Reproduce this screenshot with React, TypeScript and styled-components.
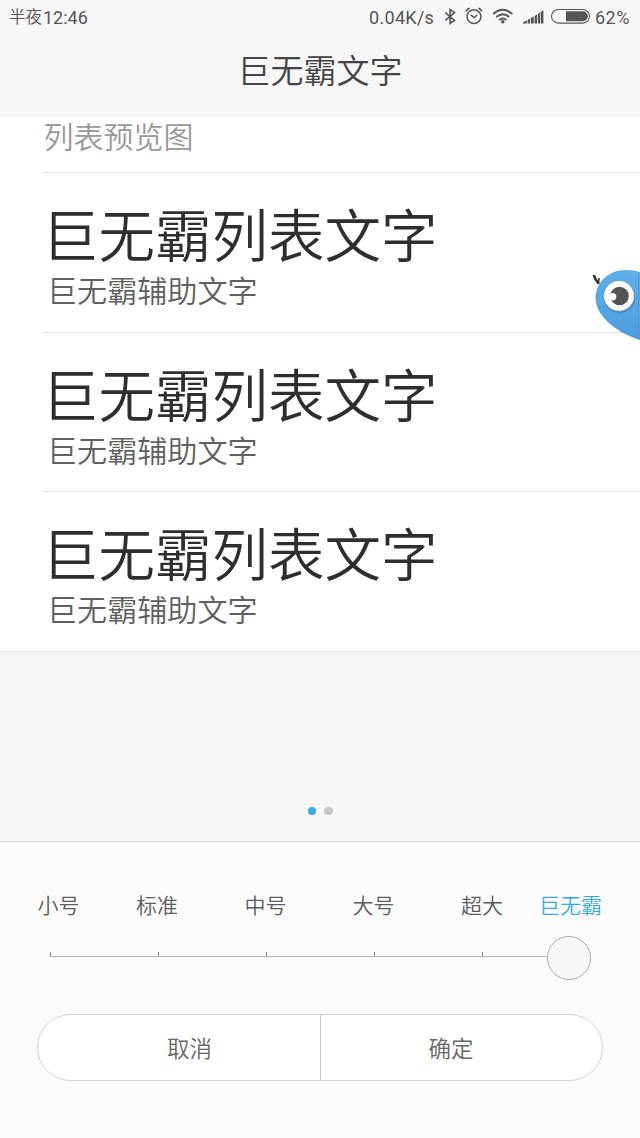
import React from "react";
import styled, { createGlobalStyle } from "styled-components";

const GlobalStyle = createGlobalStyle`
  * { box-sizing: border-box; }
  body { margin: 0; background: #f7f7f7; }
`;

const Screen = styled.div`
  position: relative;
  display: flex;
  flex-direction: column;
  width: 640px;
  height: 1138px;
  overflow: hidden;
  background: #f7f7f7;
  font-family: "Noto Sans CJK SC", sans-serif;
  font-weight: 350;
  white-space: nowrap;
`;

const StatusBar = styled.div`
  display: flex;
  align-items: center;
  height: 34px;
  padding: 0 9px;
  color: #555;
  font-family: Roboto, "Noto Sans CJK SC", sans-serif;
  font-size: 18px;
  font-weight: 400;
  line-height: 34px;
`;

const Period = styled.span`
  width: 34px;
  padding-top: 2px;
  font-size: 16.5px;
  font-weight: 350;
`;

const Clock = styled.span`
  flex: 1;
  padding-top: 1px;
`;

const Speed = styled.span`
  width: 74px;
  padding-top: 1px;
  letter-spacing: 0.3px;
`;

const StatusIcons = styled.svg`
  display: block;
  width: 152px;
  height: 34px;
`;

const Percent = styled.span`
  width: 36px;
  padding-top: 1px;
  letter-spacing: 0.5px;
`;

const Title = styled.h1`
  height: 82px;
  margin: 0;
  padding-top: 11px;
  border-bottom: 1px solid #f0f0f0;
  color: #444;
  font-size: 33px;
  font-weight: 350;
  line-height: 49px;
  text-align: center;
`;

const Preview = styled.section`
  height: 536px;
  padding-left: 43px;
  border-bottom: 1px solid #e9e9e9;
  background: #fff;
`;

const PreviewLabel = styled.div`
  height: 56px;
  padding-left: 0.5px;
  color: #999;
  font-size: 30px;
  line-height: 39px;
`;

const Row = styled.div`
  height: 159.5px;
  padding-top: 22px;
  border-top: 1px solid #e6e6e6;
`;

const RowTitle = styled.div`
  margin-left: -1px;
  color: #2e2e2e;
  font-size: 56.5px;
  line-height: 74px;
`;

const RowNote = styled.div`
  padding-left: 4px;
  color: #606060;
  font-size: 30.1px;
  line-height: 40px;
`;

const Pager = styled.div`
  display: flex;
  flex: 1;
  align-items: flex-end;
  justify-content: center;
  gap: 8px;
  padding-bottom: 26px;
`;

const Dot = styled.i<{ $active?: boolean }>`
  width: 8.5px;
  height: 8.5px;
  border-radius: 50%;
  background: ${(p) => (p.$active ? "#33a9e8" : "#c6c6c6")};
`;

const Panel = styled.section`
  height: 297px;
  padding: 46px 37px 0;
  border-top: 1px solid #d8d8d8;
  background: #fbfbfb;
`;

const Sizes = styled.div`
  display: flex;
  height: 32px;
  line-height: 32px;
`;

const SizeLabel = styled.span<{ $gap: number; $active?: boolean }>`
  margin-left: ${(p) => p.$gap}px;
  color: ${(p) => (p.$active ? "#3aaadd" : "#5c5c5c")};
  font-size: 21px;
`;

const Slider = styled.div`
  display: flex;
  align-items: center;
  height: 44px;
  margin: 16px 0 0 13px;
`;

const Segment = styled.div<{ $width: number }>`
  width: ${(p) => p.$width}px;
  height: 5px;
  margin-top: -7px;
  border-bottom: 1px solid #b4b4b4;
  background: linear-gradient(#8c8c8c, #8c8c8c) 0 0 / 1px 4px no-repeat;
`;

const Knob = styled.div`
  width: 44px;
  height: 44px;
  border: 1px solid #adadad;
  border-radius: 50%;
  background: #f7f7f7;
`;

const Actions = styled.div`
  display: grid;
  grid-template-columns: 282px 1fr;
  width: 566px;
  height: 67px;
  margin-top: 34px;
  border: 1px solid #d2d2d2;
  border-radius: 34px;
  background: #fff;
  overflow: hidden;
`;

const Action = styled.button<{ $inset: string }>`
  padding: ${(p) => p.$inset};
  border: 0;
  background: transparent;
  color: #666;
  font: inherit;
  font-size: 22.5px;

  & + & {
    border-left: 1px solid #c8c8c8;
  }
`;

const Mascot = styled.svg`
  position: absolute;
  top: 264px;
  right: 0;
  width: 54px;
  height: 82px;
`;

const sizes = [
  { text: "小号", gap: 0.5 },
  { text: "标准", gap: 56.5 },
  { text: "中号", gap: 66.5 },
  { text: "大号", gap: 66 },
  { text: "超大", gap: 66.5 },
  { text: "巨无霸", gap: 36, active: true },
];

export default function App() {
  return (
    <Screen>
      <GlobalStyle />
      <StatusBar>
        <Period>半夜</Period>
        <Clock>12:46</Clock>
        <Speed>0.04K/s</Speed>
        <StatusIcons viewBox="443 0 152 34" fill="none" stroke="#555">
          <path d="M445.3 12.6l9.2 7.8-4.4 3V9.6l4.4 3-9.2 7.8" strokeWidth="1.6" />
          <circle cx="474" cy="16.7" r="6.9" strokeWidth="1.5" />
          <path d="M470.6 14.8l3.6 2.8 3.2-2.6M466.3 11.5q.5-2.6 3.4-3.3M481.7 11.5q-.5-2.6-3.4-3.3" strokeWidth="1.5" />
          <path d="M493.2 14q9.6-8.4 19.2 0M496.3 17.1q6.5-5.6 13 0M499.2 20q3.6-3 7.2 0" strokeWidth="2" />
          <circle cx="502.8" cy="21.8" r="1.7" fill="#555" stroke="none" />
          <path d="M523 23.5v-1.2l3.8-1.8v3zM527.6 19.9l2.6-1.3v4.9h-2.6zM531 18.1l2.7-1.5v6.9H531zM534.6 16l2.6-1.7v9.2h-2.6zM538 13.8l2.3-1.5v11.2H538zM541 11.6l2.4-1.4v13.3H541z" fill="#555" stroke="none" />
          <rect x="551.5" y="9.5" width="38" height="13.6" rx="6.8" strokeWidth="1.1" />
          <path d="M566 11.3h16.8a5 5 0 0 1 0 10H566z" fill="#555" stroke="none" />
        </StatusIcons>
        <Percent>62%</Percent>
      </StatusBar>
      <Title>巨无霸文字</Title>
      <Preview>
        <PreviewLabel>列表预览图</PreviewLabel>
        {[0, 1, 2].map((row) => (
          <Row key={row}>
            <RowTitle>巨无霸列表文字</RowTitle>
            <RowNote>巨无霸辅助文字</RowNote>
          </Row>
        ))}
      </Preview>
      <Pager>
        <Dot $active />
        <Dot />
      </Pager>
      <Panel>
        <Sizes>
          {sizes.map((s) => (
            <SizeLabel key={s.text} $gap={s.gap} $active={s.active}>
              {s.text}
            </SizeLabel>
          ))}
        </Sizes>
        <Slider>
          {[108, 108, 108, 108, 65].map((width, i) => (
            <Segment key={i} $width={width} />
          ))}
          <Knob />
        </Slider>
        <Actions>
          <Action $inset="0 0 1px 21px">取消</Action>
          <Action $inset="0 21px 1px 0">确定</Action>
        </Actions>
      </Panel>
      <Mascot viewBox="586 264 54 82">
        <defs>
          <linearGradient id="body" x1="0" y1="0" x2="0" y2="1">
            <stop offset="0" stopColor="#60aee6" />
            <stop offset="1" stopColor="#4c9de0" />
          </linearGradient>
        </defs>
        <path d="M593.8 275q1.2 4.5 4.8 8.5" fill="none" stroke="#333" strokeWidth="2.6" />
        <path d="M599.3 278q-1.2 2.8-.5 6" fill="none" stroke="#333" strokeWidth="1.6" />
        <path d="M640 272Q629 268.500 617 271C603 275 595.5 286 595.5 298C596 318 620 334 640 340Z" fill="url(#body)" />
        <path d="M638.5 272v67" stroke="#4a92cf" strokeWidth="0.6" />
        <circle cx="619.5" cy="297.5" r="15.7" fill="#468fc9" />
        <circle cx="619" cy="296" r="15" fill="#fff" />
        <circle cx="619.5" cy="296" r="9.3" fill="#555" />
        <circle cx="612.6" cy="296.8" r="3.7" fill="#fff" />
      </Mascot>
    </Screen>
  );
}
